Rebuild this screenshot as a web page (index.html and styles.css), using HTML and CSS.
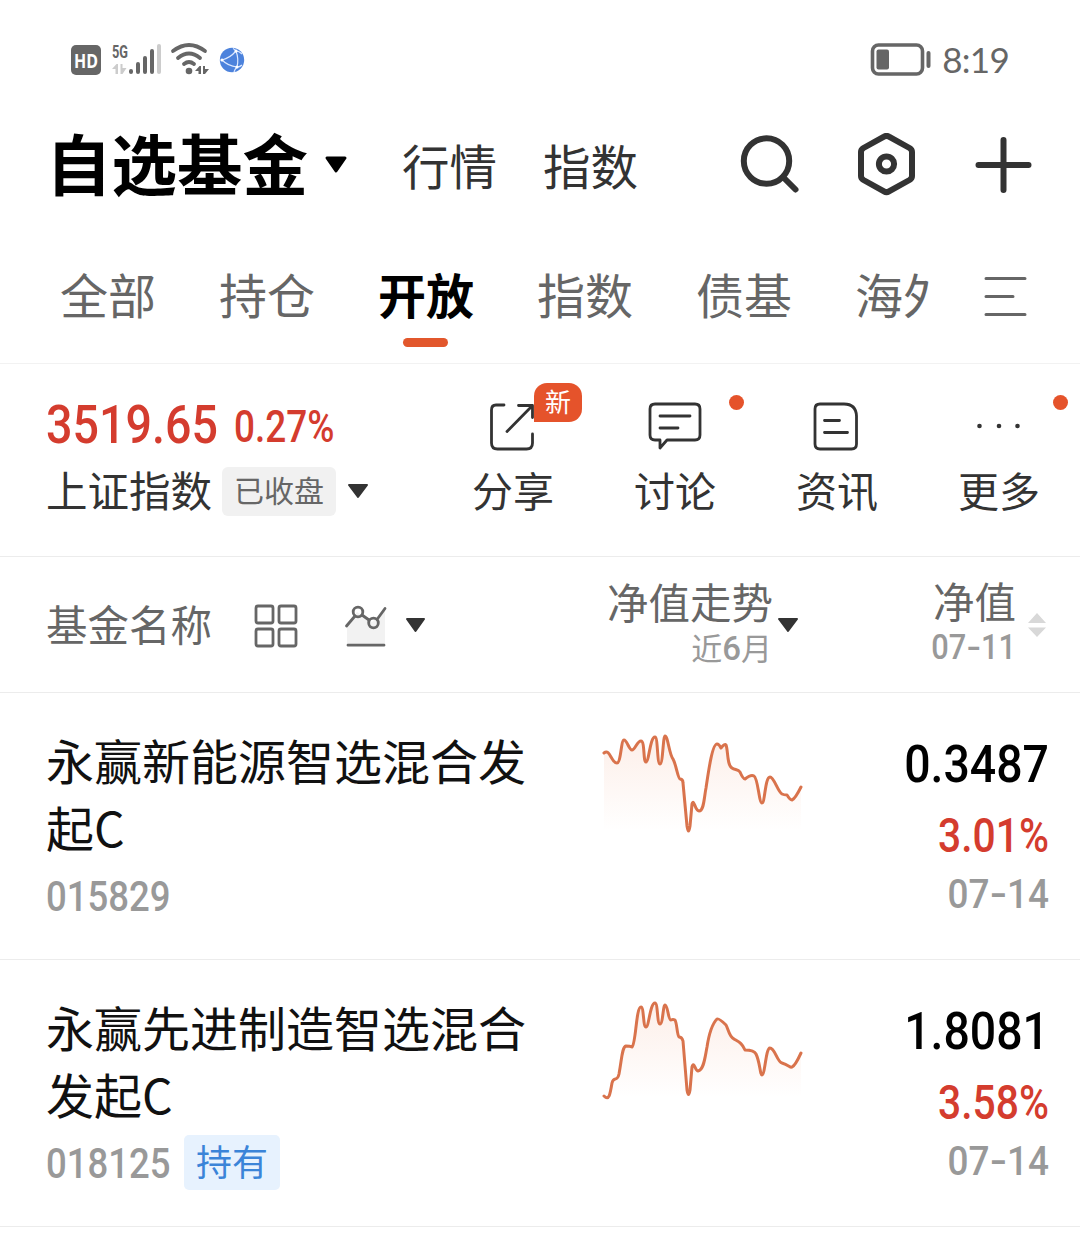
FILE: index.html
```
<!DOCTYPE html>
<html lang="zh-CN">
<head>
  <meta charset="UTF-8" />
  <meta name="viewport" content="width=device-width, initial-scale=1.0"/>
  <title>自选基金</title>
  <link rel="stylesheet" href="styles.css">
</head>
<body>
  <div class="status-bar">
    <svg class="status-icons" width="200" height="60" viewBox="50 30 200 60">
      <rect x="71" y="45" width="30" height="30" rx="5" fill="#666"/>
      <text x="86" y="67.500" class="hd-text" text-anchor="middle" textLength="24" lengthAdjust="spacingAndGlyphs">HD</text>
      <text x="112" y="57.500" class="net-text" textLength="16" lengthAdjust="spacingAndGlyphs">5G</text>
      <path d="M112 69l4.500-5h1.500v10h-2.500v-5zM120.500 64h2v4h4l-4 6h-2z" fill="#ccc"/>
      <g stroke="#666" stroke-width="4" stroke-linecap="round">
        <path d="M131 71v1M138 64v8M145 58v14M152 51v21"/>
        <path d="M159 46v26" stroke="#ccc"/>
      </g>
      <g fill="none" stroke="#666" stroke-width="3.800" stroke-linecap="round">
        <path d="M173 51q16-12 32 0M178 58q11-9 22 0M184 64q5-4 10 0"/>
      </g>
      <circle cx="189" cy="71" r="3.300" fill="#666"/>
      <path d="M195 71l4.500-5h1.500v8h-2.500v-3zM203 66h2v3h4l-4 5h-2z" fill="#666"/>
      <circle cx="232" cy="60" r="12.200" fill="#4c82dc"/>
      <path d="M222 60q8-2 14-9 3 8 1 16-9-1-15-7zM233 48.500q2 1 3 2.500 3 0 6 3M237 67q3 0 5-2M237 67q-2 2-3 5" fill="none" stroke="#dce8ff" stroke-width="1.200"/>
      <g fill="#fff"><circle cx="222" cy="60" r="1.600"/><circle cx="236" cy="51" r="1.600"/><circle cx="237" cy="67" r="1.600"/></g>
    </svg>
    <div class="status-right">
      <svg width="62" height="34" viewBox="0 0 62 34">
        <rect x="3.500" y="2" width="50" height="29" rx="6" fill="none" stroke="#666" stroke-width="3.600"/>
        <rect x="7.500" y="6.500" width="12.500" height="20" rx="2" fill="#666"/>
        <path d="M59.500 10v13" stroke="#666" stroke-width="4" stroke-linecap="round"/>
      </svg>
      <span class="time">8:19</span>
    </div>
  </div>

  <header class="header">
    <h1>自选基金</h1>
    <svg class="title-arrow" width="24" height="18" viewBox="0 0 24 18"><path d="M3 2h18L12 15z" fill="#000" stroke="#000" stroke-width="3" stroke-linejoin="round"/></svg>
    <a class="top-link">行情</a>
    <a class="top-link">指数</a>
    <div class="header-icons">
      <svg width="60" height="64" viewBox="740 133 60 64"><circle cx="766.500" cy="161" r="22.700"/><path d="M783 177l12.500 12.500"/></svg>
      <svg width="60" height="64" viewBox="857 133 60 64"><path d="M884 136.600q2.500-1.500 5 0L909.500 148q2.500 1.500 2.500 4v24q0 2.500-2.500 4L889 191.400q-2.500 1.500-5 0L863.500 180q-2.500-1.500-2.500-4v-24q0-2.500 2.500-4z"/><circle cx="886.500" cy="164" r="7.600"/></svg>
      <svg width="60" height="64" viewBox="974 133 60 64"><path d="M978.500 165h50M1003.500 140v50"/></svg>
    </div>
  </header>

  <nav class="tabs">
    <div class="tab">全部</div>
    <div class="tab">持仓</div>
    <div class="tab active">开放</div>
    <div class="tab">指数</div>
    <div class="tab">债基</div>
    <div class="tab cut">海外</div>
    <svg class="menu-icon" width="46" height="44" viewBox="0 0 46 44"><path d="M3 3.500h39M3 21.500h27M3 39.500h39" stroke="#666" stroke-width="3" stroke-linecap="round"/></svg>
  </nav>

  <section class="market">
    <div class="index">
      <div class="index-values">
        <span class="num index-value">3519.65</span>
        <span class="num index-change">0.27%</span>
      </div>
      <div class="index-name">
        <span class="index-title">上证指数</span>
        <span class="closed">已收盘</span>
        <svg width="22" height="16" viewBox="0 0 22 16"><path d="M2 2h18L11 14z" fill="#333" stroke="#333" stroke-width="2" stroke-linejoin="round"/></svg>
      </div>
    </div>
    <div class="action">
      <svg width="56" height="56" viewBox="485 398 56 56"><path d="M504 405h-8q-4.500 0-4.500 5v33q0 6 6 6h29q6 0 6-6v-9M518.500 405.500h14v12M532 406l-25 25.500"/></svg>
      <span>分享</span>
      <i class="badge">新</i>
    </div>
    <div class="action">
      <svg width="56" height="56" viewBox="647 398 56 56"><path d="M655 404h40q5 0 5 5v26q0 5-5 5h-28l-7 8v-8h-5q-5 0-5-5v-26q0-5 5-5zM660 416h30M660 428h18"/></svg>
      <span>讨论</span>
      <i class="dot"></i>
    </div>
    <div class="action">
      <svg width="56" height="56" viewBox="809 398 56 56"><path d="M820 404h24q12 0 12.500 12v28q0 5-5 5h-31.500q-5 0-5-5v-35q0-5 5-5zM824.500 420.500h15M824.500 432.500h23"/></svg>
      <span>资讯</span>
    </div>
    <div class="action">
      <svg width="56" height="56" viewBox="971 398 56 56"><g fill="#333" stroke="none"><circle cx="979.500" cy="426" r="2.300"/><circle cx="999" cy="426" r="2.300"/><circle cx="1017.500" cy="426" r="2.300"/></g></svg>
      <span>更多</span>
      <i class="dot"></i>
    </div>
  </section>

  <section class="table-head">
    <span class="head-name">基金名称</span>
    <svg class="head-icons" width="180" height="50" viewBox="250 600 180 50">
      <g fill="none" stroke="#666" stroke-width="2.800">
        <rect x="256" y="606" width="17" height="17" rx="2"/><rect x="279" y="606" width="17" height="17" rx="2"/>
        <rect x="256" y="629" width="17" height="17" rx="2"/><rect x="279" y="629" width="17" height="17" rx="2"/>
      </g>
      <path d="M347 626l10-14 15 10 13-13v36h-38z" fill="#f2f2f2"/>
      <g fill="none" stroke="#666" stroke-width="2.800" stroke-linecap="round">
        <path d="M346.500 626l8.500-10M362 615l7 5M377 619.500l8-11M348 645.200h36"/>
        <circle cx="358" cy="612" r="4.800"/><circle cx="373.500" cy="623" r="4.800"/>
      </g>
      <path d="M407 619h17l-8.500 12z" fill="#333" stroke="#333" stroke-width="2" stroke-linejoin="round"/>
    </svg>
    <div class="head-trend">
      <div>净值走势</div>
      <small>近<b class="six">6</b>月</small>
    </div>
    <svg class="head-arrow" width="22" height="16" viewBox="0 0 22 16"><path d="M2 2h18L11 14z" fill="#333" stroke="#333" stroke-width="2" stroke-linejoin="round"/></svg>
    <div class="head-value">
      <div>净值</div>
      <small class="num head-date">07<span class="dash">-</span>11</small>
    </div>
    <svg class="sort" width="20" height="26" viewBox="0 0 20 26"><path d="M10 1l9 10H1zM10 25l9-9.500H1z" fill="#d8d8d8"/></svg>
  </section>

  <main>
    <article class="fund">
      <div class="fund-info">
        <h2>永赢新能源智选混合发起C</h2>
        <div class="fund-meta"><span class="num code">015829</span></div>
      </div>
      <svg class="chart" width="204" height="110" viewBox="602 730 204 110">
        <defs>
          <linearGradient id="fade" x1="0" y1="0" x2="0" y2="1">
            <stop offset="0" stop-color="#e96b36" stop-opacity=".11"/>
            <stop offset="1" stop-color="#e96b36" stop-opacity="0"/>
          </linearGradient>
        </defs>
        <path class="area" d="M604 753C610 748 611 763 617 763C621 763 621 740 624 740C627 740 629 750 632 750C635 750 637 741 641 741C645 741 643 762 646 762C649 762 650 737 655 737C658 737 657 764 660 764C663 764 663 736 665 736C668 736 669 754 673 759C676 764 678 779 680 779Q683 779 683 783L688 831 692 804C694 798 695 811 699 811C704 811 704 798 706 788C708 775 712 744 717 744Q719 744 721 748Q725 743 726 745C728 749 727 766 732 768C735 770 738 769 740 772Q743 779 745 779Q751 774 754 776C758 778 759 803 762 803C765 803 765 777 770 777C774 777 778 792 782 794Q784 795 787 795Q790 800 792 800Q795 799 801 787V830H604z"/>
        <path class="line" d="M604 753C610 748 611 763 617 763C621 763 621 740 624 740C627 740 629 750 632 750C635 750 637 741 641 741C645 741 643 762 646 762C649 762 650 737 655 737C658 737 657 764 660 764C663 764 663 736 665 736C668 736 669 754 673 759C676 764 678 779 680 779Q683 779 683 783L687 826Q688.500 836 690 826L692 804C694 798 695 811 699 811C704 811 704 798 706 788C708 775 712 744 717 744Q719 744 721 748Q725 743 726 745C728 749 727 766 732 768C735 770 738 769 740 772Q743 779 745 779Q751 774 754 776C758 778 759 803 762 803C765 803 765 777 770 777C774 777 778 792 782 794Q784 795 787 795Q790 800 792 800Q795 799 801 787"/>
      </svg>
      <div class="fund-value">
        <div class="num value">0.3487</div>
        <div class="num change">3.01%</div>
        <div class="num date">07<span class="dash">-</span>14</div>
      </div>
    </article>

    <article class="fund">
      <div class="fund-info">
        <h2>永赢先进制造智选混合发起C</h2>
        <div class="fund-meta"><span class="num code">018125</span><span class="held">持有</span></div>
      </div>
      <svg class="chart" width="204" height="110" viewBox="602 997 204 110">
        <path class="area" d="M604 1096C609 1101 610 1095 612 1083C614 1075 617 1083 619 1074C622 1058 622 1047 626 1046Q630 1046 632 1047C636 1044 636 1007 641 1007C644 1007 643 1027 646 1027C649 1027 650 1003 655 1003C658 1003 657 1024 660 1024C663 1024 663 1005 665 1005C668 1005 668 1020 671 1020Q673 1019 675 1020C677 1023 677 1035 679 1037Q682 1037 683 1041L688 1095 692 1067C694 1060 695 1071 698 1071C704 1070 705 1057 707 1047C709 1034 713 1023 717 1019Q719 1018 726 1025C728 1028 729 1037 734 1039C739 1042 742 1043 745 1050Q754 1050 756 1054C760 1062 760 1075 762 1075C765 1075 766 1047 770 1048C775 1048 777 1062 782 1063C789 1065 790 1068 792 1067Q795 1066 801 1053V1097H604z"/>
        <path class="line" d="M604 1096C609 1101 610 1095 612 1083C614 1075 617 1083 619 1074C622 1058 622 1047 626 1046Q630 1046 632 1047C636 1044 636 1007 641 1007C644 1007 643 1027 646 1027C649 1027 650 1003 655 1003C658 1003 657 1024 660 1024C663 1024 663 1005 665 1005C668 1005 668 1020 671 1020Q673 1019 675 1020C677 1023 677 1035 679 1037Q682 1037 683 1041L687 1090Q688.500 1099 690 1090L692 1067C694 1060 695 1071 698 1071C704 1070 705 1057 707 1047C709 1034 713 1023 717 1019Q719 1018 726 1025C728 1028 729 1037 734 1039C739 1042 742 1043 745 1050Q754 1050 756 1054C760 1062 760 1075 762 1075C765 1075 766 1047 770 1048C775 1048 777 1062 782 1063C789 1065 790 1068 792 1067Q795 1066 801 1053"/>
      </svg>
      <div class="fund-value">
        <div class="num value">1.8081</div>
        <div class="num change">3.58%</div>
        <div class="num date">07<span class="dash">-</span>14</div>
      </div>
    </article>
  </main>
</body>
</html>
```
FILE: styles.css
```
* {
  box-sizing: border-box;
}

body {
  margin: 0;
  width: 1080px;
  min-height: 1251px;
  overflow-x: hidden;
  background: #fff;
  color: #333;
  font-family: "Noto Sans CJK SC", sans-serif;
}

svg {
  display: block;
  flex: none;
}

h1, h2 {
  margin: 0;
}

/* narrow figures */
.num {
  display: block;
  font-family: Roboto, sans-serif;
  font-weight: 500;
  transform-origin: left center;
  white-space: nowrap;
}

.status-bar {
  display: flex;
  justify-content: space-between;
  height: 120px;
  padding: 30px 71px 30px 50px;
}

.hd-text {
  font: bold 20px "Open Sans", sans-serif;
  fill: #fff;
}

.net-text {
  font: bold 18px Roboto, sans-serif;
  fill: #666;
}

.status-right {
  display: flex;
  align-items: center;
  gap: 11px;
}

.time {
  color: #666;
  font: 35px/58px Lato, sans-serif;
  letter-spacing: -0.7px;
  padding-bottom: 2px;
}

.header {
  display: flex;
  align-items: center;
  height: 90px;
  padding: 0 46px;
}

.header h1 {
  width: 261px;
  padding-bottom: 7px;
  color: #000;
  font-size: 65.5px;
  font-weight: 700;
  line-height: 83px;
  white-space: nowrap;
}

.title-arrow {
  margin-left: 17px;
}

.top-link {
  width: 96px;
  margin-left: 46px;
  padding-bottom: 1px;
  font-size: 47.5px;
  line-height: 88px;
}

.title-arrow + .top-link {
  margin-left: 54px;
}

.header-icons {
  display: flex;
  gap: 57px;
  margin-left: 102px;
  fill: none;
  stroke: #333;
  stroke-width: 6;
  stroke-linecap: round;
}

.tabs {
  display: flex;
  height: 154px;
  padding: 49px 0 0 60px;
  border-bottom: 1px solid #f2f2f2;
}

.tab {
  width: 96px;
  height: 89px;
  margin-right: 63px;
  color: #666;
  font-size: 48px;
  line-height: 68px;
  white-space: nowrap;
}

.tab.active {
  color: #000;
  font-weight: 700;
}

.tab.active::after {
  content: "";
  display: block;
  width: 45px;
  height: 9px;
  margin: 11px 0 0 25px;
  border-radius: 5px;
  background: #e2572c;
}

.tab.cut {
  width: 75px;
  margin-right: 53px;
  overflow: hidden;
}

.menu-icon {
  margin-top: 16px;
}

.market {
  display: flex;
  height: 193px;
  padding-left: 46px;
  border-bottom: 1px solid #ececec;
}

.index {
  width: 386px;
  padding-top: 30px;
}

.index-values {
  display: flex;
  height: 62px;
  color: #d43c2e;
}

.index-value {
  width: 188px;
  font-size: 53px;
  line-height: 62px;
  transform: scaleX(.88);
}

.index-change {
  font-size: 45px;
  line-height: 66px;
  transform: scaleX(.82);
}

.index-name {
  display: flex;
  align-items: center;
  height: 70px;
  font-size: 41.5px;
}

.index-title {
  padding-bottom: 4px;
}

.closed {
  height: 49px;
  margin: 0 11px 0 10px;
  padding: 0 12px;
  border-radius: 6px;
  background: #f1f1f1;
  color: #666;
  font-size: 30px;
  line-height: 45px;
}

.action {
  position: relative;
  display: flex;
  flex-direction: column;
  align-items: center;
  width: 162px;
  padding-top: 34px;
  font-size: 41px;
  line-height: 60px;
}

.action svg {
  margin-bottom: 5px;
  fill: none;
  stroke: #333;
  stroke-width: 2.8;
  stroke-linecap: round;
  stroke-linejoin: round;
}

.badge {
  position: absolute;
  top: 19px;
  left: 102px;
  width: 48px;
  height: 39px;
  border-radius: 13px 13px 13px 0;
  background: #e5532b;
  color: #fff;
  font-size: 26px;
  font-style: normal;
  line-height: 36px;
  text-align: center;
}

.dot {
  position: absolute;
  top: 31px;
  right: 12px;
  width: 15px;
  height: 15px;
  border-radius: 50%;
  background: #e5532b;
}

.table-head {
  display: flex;
  align-items: center;
  height: 136px;
  padding-left: 46px;
  border-bottom: 1px solid #ececec;
  color: #666;
  font-size: 41.5px;
}

.head-name {
  width: 204px;
  padding-bottom: 4px;
}

.head-trend,
.head-value {
  line-height: 46px;
  text-align: right;
}

.head-trend {
  width: 343px;
}

.head-trend small,
.head-value small {
  display: block;
  color: #999;
  font-size: 31px;
  line-height: 46px;
}

.head-trend small {
  padding-right: 1px;
}

.six {
  font-family: Roboto, sans-serif;
  font-size: 33px;
  font-weight: 500;
}

.head-arrow {
  margin-left: 4px;
}

.head-value {
  width: 217px;
}

.head-value .head-date {
  font-size: 35px;
  line-height: 50px;
  transform: scaleX(.88);
  transform-origin: right center;
}

.dash {
  display: inline-block;
  margin: 0 .07em;
  transform: scaleX(1.35);
}

.sort {
  margin-left: 11px;
}

.fund {
  display: flex;
  height: 267px;
  padding: 33px 31px 0 46px;
  border-bottom: 1px solid #ececec;
}

.fund-info {
  width: 556px;
}

.fund h2 {
  width: 484px;
  color: #111;
  font-size: 48px;
  font-weight: 400;
  line-height: 67px;
}

.fund-meta {
  display: flex;
  align-items: center;
  height: 70px;
}

.code {
  width: 138px;
  padding-top: 2px;
  color: #999;
  font-size: 42px;
  transform: scaleX(.87);
}

.held {
  height: 55px;
  padding: 0 12px;
  border-radius: 5px;
  background: #e7f2fe;
  color: #3b84d8;
  font-size: 36px;
  line-height: 51px;
}

.chart {
  margin-top: 4px;
}

.area {
  fill: url(#fade);
}

.line {
  fill: none;
  stroke: #d9734c;
  stroke-width: 3;
  stroke-linecap: round;
  stroke-linejoin: round;
}

.fund-value {
  flex: 1;
  padding-top: 3px;
  text-align: right;
}

.fund-value .num {
  transform-origin: right center;
}

.value {
  color: #000;
  font-size: 51px;
  line-height: 71px;
  transform: scaleX(.91);
}

.change {
  color: #d43c2e;
  font-size: 48px;
  line-height: 72px;
  transform: scaleX(.85);
}

.date {
  color: #999;
  font-size: 41px;
  line-height: 44px;
  transform: scaleX(.9);
}
```
